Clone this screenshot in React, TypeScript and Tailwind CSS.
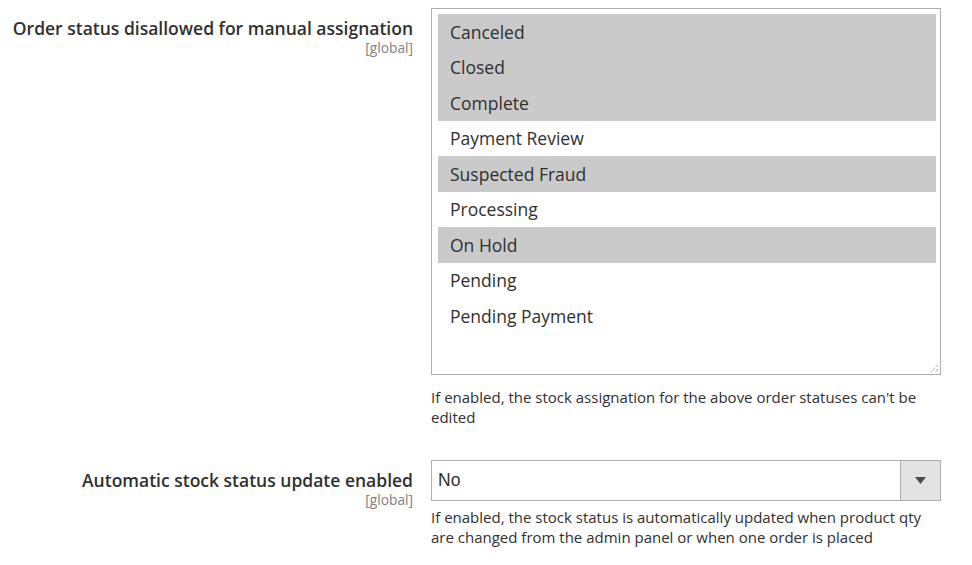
const statuses = [
  { label: "Canceled", selected: true },
  { label: "Closed", selected: true },
  { label: "Complete", selected: true },
  { label: "Payment Review", selected: false },
  { label: "Suspected Fraud", selected: true },
  { label: "Processing", selected: false },
  { label: "On Hold", selected: true },
  { label: "Pending", selected: false },
  { label: "Pending Payment", selected: false },
];

function FieldLabel({ text, className }: { text: string; className?: string }) {
  return (
    <div className={`w-[413px] shrink-0 text-right ${className ?? ""}`}>
      <div className="text-[17.5px] font-semibold leading-[21px] text-[#303030]">{text}</div>
      <div className="text-[13.75px] leading-[17px] text-[#808080]">[global]</div>
    </div>
  );
}

function Note({ children }: { children: React.ReactNode }) {
  return <p className="text-[15px] leading-[19.5px] text-[#303030]">{children}</p>;
}

export default function App() {
  return (
    <div
      className="h-[565px] w-[972px] bg-white pt-[8px]"
      style={{ fontFamily: '"Open Sans", sans-serif' }}
    >
      <div className="flex">
        <FieldLabel text="Order status disallowed for manual assignation" className="pt-[10px]" />
        <div className="ml-[18px] w-[510px]">
          <div className="relative h-[367px] border border-[#adadad] pl-[6px] pr-[4px] py-[5px]">
            {statuses.map((s) => (
              <div
                key={s.label}
                className={`flex h-[35.5px] items-center pl-[12px] text-[17.5px] text-[#303030] ${
                  s.selected ? "bg-[#cacaca]" : ""
                }`}
              >
                {s.label}
              </div>
            ))}
            <svg
              className="absolute bottom-[1px] right-[1px]"
              width="10"
              height="10"
              viewBox="0 0 10 10"
            >
              <path d="M9 2 L2 9 M9 6 L6 9" stroke="#808080" strokeWidth="1" strokeDasharray="1 1" />
            </svg>
          </div>
          <div className="mt-[13px]">
            <Note>
              If enabled, the stock assignation for the above order statuses can't be edited
            </Note>
          </div>
        </div>
      </div>

      <div className="mt-[33px] flex">
        <FieldLabel text="Automatic stock status update enabled" className="pt-[10px]" />
        <div className="ml-[18px] w-[510px]">
          <div className="flex h-[41px] border border-[#adadad]">
            <div
              className="flex flex-1 items-center pl-[6px] text-[17.5px] text-[#303030]"
              style={{ fontFamily: '"Liberation Sans", Arial, sans-serif' }}
            >
              No
            </div>
            <div className="flex w-[40px] items-center justify-center border-l border-[#adadad] bg-[#e3e3e3]">
              <svg width="11" height="7" viewBox="0 0 11 7">
                <path d="M0 0 H11 L5.5 7 Z" fill="#514943" />
              </svg>
            </div>
          </div>
          <div className="mt-[7px]">
            <Note>
              If enabled, the stock status is automatically updated when product qty are changed
              from the admin panel or when one order is placed
            </Note>
          </div>
        </div>
      </div>
    </div>
  );
}
